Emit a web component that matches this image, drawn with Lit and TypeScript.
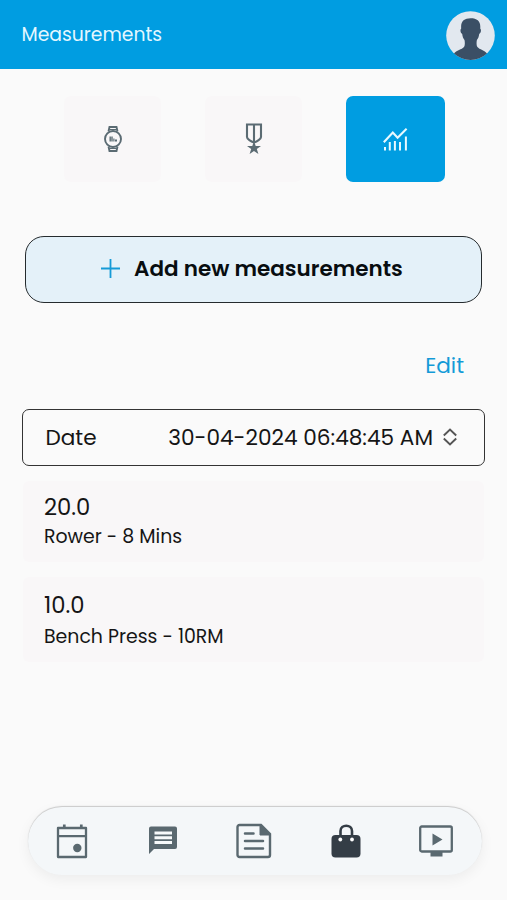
import { LitElement, html, css, svg } from "lit";
import { customElement } from "lit/decorators.js";

const watch = svg`<g fill="none" stroke="#5b6b73" stroke-width="1.900">
  <circle cx="14" cy="14" r="8"/><path d="M9.500 6.500 10.500 2h7l1 4.500M9.500 21.500l1 4.500h7l1-4.500"/>
  <path d="M10.500 4.700h7M10.500 23.300h7" stroke-width="1.200"/></g>
  <path d="M10.500 11.500h1.400v5h-1.400zM12.300 11.500h1.400v5h-1.400zM14.300 13.500h1.200v3h-1.200zM16 14.500h2v2h-2z" fill="#5b6b73"/>`;

const medal = svg`<path d="M6 1.500h14v12.500c0 2-4 4.500-7 5.500-3-1-7-3.500-7-5.500zM13 2v18" fill="none" stroke="#5b6b73" stroke-width="2.100"/>
  <path d="m13 18 1.700 4.900h5.300l-4.200 3.200 1.600 5-4.400-3.100-4.400 3.100 1.600-5L6 22.900h5.300z" fill="#5b6b73"/>`;

const chart = svg`<g fill="none" stroke="#e8f9ff" stroke-width="2">
  <path d="M.8 14.200 9.800 4.500l4.800 5.300L23.600.8" stroke-width="2.100"/>
  <path d="M2 19v3.500M6.800 14v8.500M11.900 13v9.500M17 14v8.500M22.900 8.500v14"/></g>`;

@customElement("app-root")
export class AppRoot extends LitElement {
  static styles = css`
    :host {
      display: flex;
      flex-direction: column;
      box-sizing: border-box;
      width: 507px;
      height: 900px;
      overflow: hidden;
      background: #fafafa;
      color: #151515;
      font-family: Poppins, Inter, sans-serif;
    }
    * { box-sizing: border-box; }
    svg { display: block; flex: none; }
    .header {
      height: 69px;
      flex: none;
      display: flex;
      align-items: center;
      justify-content: space-between;
      padding: 2px 12px 0 21.500px;
      background: #009de1;
      color: #e4f7ff;
    }
    .title { font-size: 18.800px; line-height: 24px; padding-bottom: 1px; }
    .tabs { display: flex; gap: 44px; margin: 27px 61px 0 64px; }
    .tab {
      width: 97px;
      height: 86px;
      display: flex;
      align-items: center;
      justify-content: center;
      background: #f9f7f8;
      border-radius: 7px;
    }
    .active { background: #009de1; width: 99px; }
    .add {
      display: flex;
      align-items: center;
      height: 67px;
      margin: 54px 25px 0;
      padding: 0 0 2px 75px;
      border: 1.500px solid #252b2e;
      border-radius: 19px;
      background: #e4f1f9;
      color: #080d10;
      font-size: 21.500px;
      font-weight: 600;
    }
    .label { margin-left: 14px; white-space: nowrap; }
    .edit {
      align-self: flex-end;
      margin: 49px 43px 0 0;
      line-height: 28px;
      font-size: 21.600px;
      color: #139ad7;
    }
    .date {
      display: flex;
      align-items: center;
      justify-content: space-between;
      height: 57px;
      flex: none;
      margin: 29px 22px 15px;
      padding: 0 27px 1px 22.500px;
      border: 1.500px solid #333;
      border-radius: 7px;
      font-size: 21.600px;
    }
    .stamp { display: flex; align-items: center; gap: 10px; white-space: nowrap; }
    .card {
      height: 81px;
      flex: none;
      margin: 0 23px 15px;
      padding: 11px 21px 0;
      background: #f9f7f8;
      border-radius: 6px;
    }
    .second { height: 85px; padding-top: 13px; }
    .value { font-size: 22.700px; line-height: 30px; }
    .name { font-size: 18.900px; line-height: 29px; }
    .second .name { padding-top: 2px; }
    .nav {
      display: flex;
      align-items: center;
      justify-content: space-between;
      height: 68px;
      flex: none;
      margin: auto 25px 25px 28px;
      padding: 0 29px 0 27px;
      border-radius: 35px;
      background: #f4f7f9;
      box-shadow: 0 -1px 1px #c9c9c9, 0 4px 14px rgba(0, 0, 0, 0.06);
    }
  `;

  render() {
    return html`
      <header class="header">
        <span class="title">Measurements</span>
        <svg width="49" height="49" viewBox="0 0 49 49">
          <circle cx="24.500" cy="24.500" r="24.300" fill="#e2e8ef"/>
          <path d="M8 42.500c2-3 8-4 10-6.500 1-1.500 1-4.500.5-7-1.300-1.300-2-3.500-2.300-6-2-1-2.200-4.500-1-5.500C14.500 10.500 18 7.300 24.700 7.300S35 10.500 34.200 17.500c1.200 1 1 4.500-1 5.500-.3 2.500-1 4.700-2.300 6-.5 2.500-.5 5.500.5 7 2 2.500 7.500 3.500 9.600 6.500a24.300 24.300 0 0 1-33 0z" fill="#3b4f65"/>
        </svg>
      </header>
      <div class="tabs">
        <div class="tab"><svg width="28" height="28" viewBox="0 0 28 28">${watch}</svg></div>
        <div class="tab"><svg width="26" height="32" viewBox="0 0 26 32">${medal}</svg></div>
        <div class="tab active"><svg width="25" height="23" viewBox="0 0 25 23">${chart}</svg></div>
      </div>
      <div class="add">
        <svg width="19" height="19" viewBox="0 0 19 19"><path d="M9.500 0v19M0 9.500h19" stroke="#169bd7" stroke-width="1.800"/></svg>
        <span class="label">Add new measurements</span>
      </div>
      <span class="edit">Edit</span>
      <div class="date">
        <span>Date</span>
        <span class="stamp"><span>30-04-2024 06:48:45 AM</span>
          <svg width="14" height="18" viewBox="0 0 14 18"><path d="M.8 7.500 7 1.500l6.200 6M.8 10.500l6.200 6 6.200-6" fill="none" stroke="#555" stroke-width="1.900"/></svg>
        </span>
      </div>
      <div class="card"><div class="value">20.0</div><div class="name">Rower - 8 Mins</div></div>
      <div class="card second"><div class="value">10.0</div><div class="name">Bench Press - 10RM</div></div>
      <nav class="nav">
        <svg width="34" height="36" viewBox="0 0 34 36">
          <path d="M3 5h28v29H3zM3 13.200h28" fill="none" stroke="#5a6970" stroke-width="2.300" stroke-linejoin="round"/>
          <path d="M9.300 1.500v3M26.300 1.500v3" stroke="#5a6970" stroke-width="2.700"/>
          <circle cx="22.300" cy="25" r="4.200" fill="#5a6970"/>
        </svg>
        <svg width="30" height="30" viewBox="0 0 30 30">
          <path d="M3 .5h24a2 2 0 0 1 2 2V21a2 2 0 0 1-2 2H6l-5 5V2.500a2 2 0 0 1 2-2z" fill="#5a6970"/>
          <path d="M6.500 7h17.500M6.500 11.800h17.500M6.500 16.500h17.500" stroke="#f7fafb" stroke-width="3"/>
        </svg>
        <svg width="36" height="36" viewBox="0 0 36 36">
          <path d="M3.500 2h21.500l9 9v21a2 2 0 0 1-2 2H3.500a2 2 0 0 1-2-2V4a2 2 0 0 1 2-2z" fill="none" stroke="#5a6970" stroke-width="2.400"/>
          <path d="M24 1v11h11z" fill="#5a6970" stroke="#5a6970"/>
          <path d="M9 10.500h8.500M9 18h18M9 25.500h18" stroke="#5a6970" stroke-width="2.500" stroke-linecap="round"/>
        </svg>
        <svg width="30" height="36" viewBox="0 0 30 36">
          <rect x=".5" y="12" width="29" height="22.500" rx="4" fill="#343d46"/>
          <path d="M9.500 16V8c0-7 11.500-7 11.500 0v8" fill="none" stroke="#343d46" stroke-width="2.600"/>
          <circle cx="9.300" cy="16.500" r="1.900" fill="#fff"/><circle cx="21" cy="16.500" r="1.900" fill="#fff"/>
        </svg>
        <svg width="34" height="32" viewBox="0 0 34 32">
          <rect x="1.200" y="1.500" width="31.600" height="25" rx="1.500" fill="none" stroke="#5a6970" stroke-width="2.300"/>
          <path d="M13.500 8.500v12l10-6zM11.500 27h12v4.500h-12z" fill="#5a6970"/>
        </svg>
      </nav>
    `;
  }
}
